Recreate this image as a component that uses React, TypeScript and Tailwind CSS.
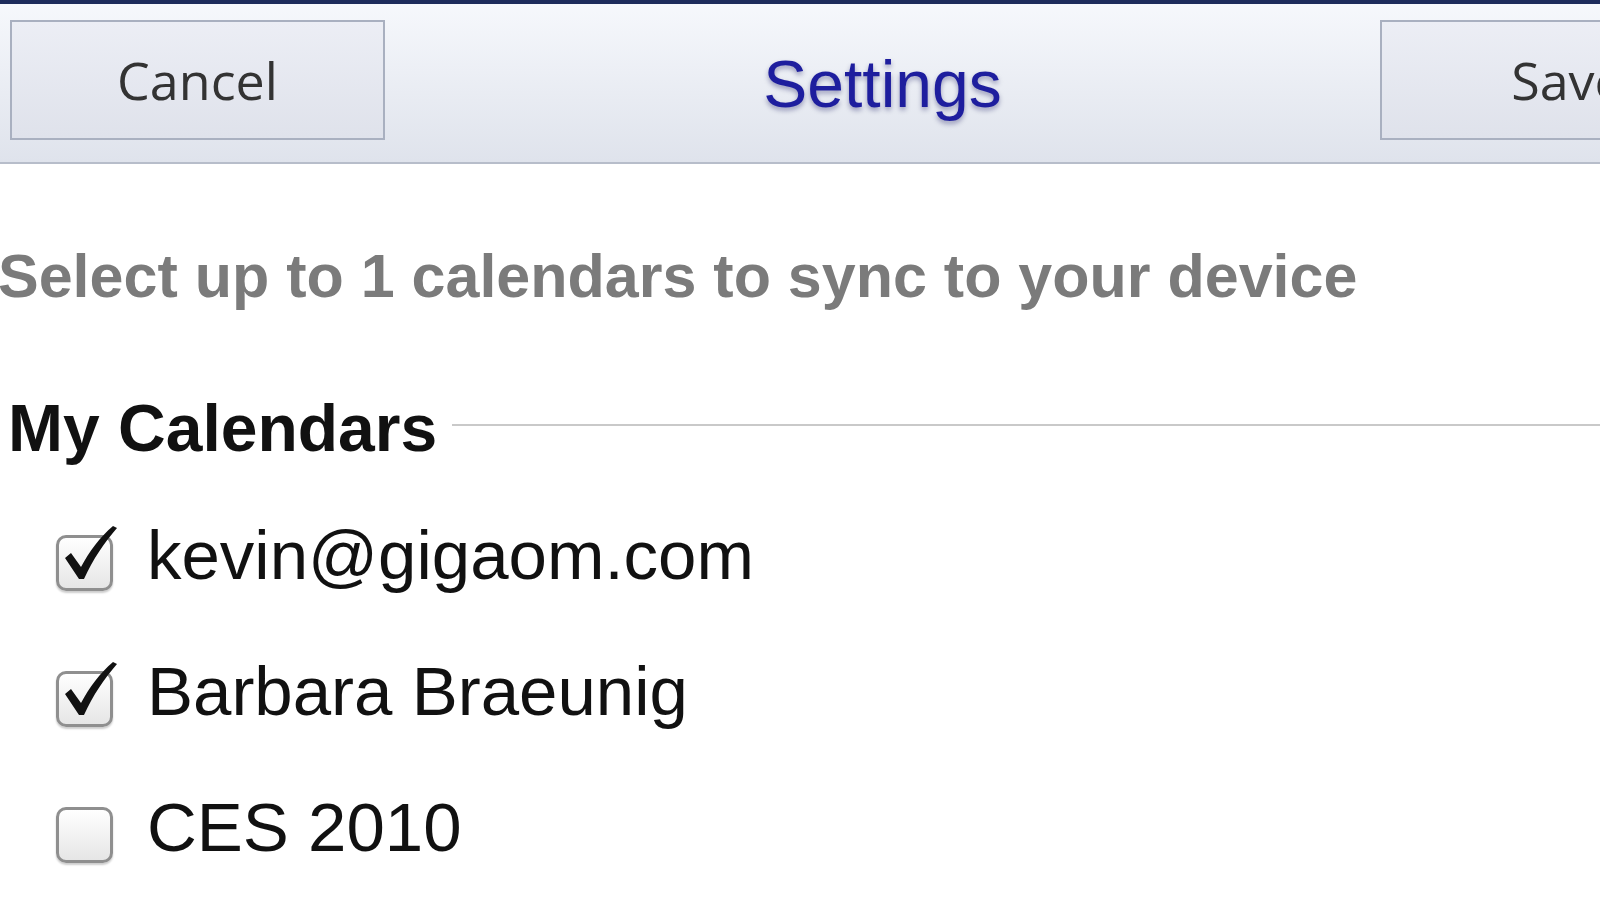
import React from "react";

function Check() {
  return (
    <svg
      className="absolute left-0 top-[-16px] pointer-events-none"
      width="70"
      height="72"
      viewBox="0 0 70 72"
    >
      <path
        d="M9 39 L15 34 L25 48 C33 33 44 18 57 7 L61 9 C48 24 37 40 28 60 L23 60 Z"
        fill="#111"
      />
    </svg>
  );
}

function Row({ label, checked }: { label: string; checked: boolean }) {
  return (
    <div className="flex items-start h-[68px]">
      <div className="relative mt-[14px] w-[57px] h-[56px] shrink-0">
        <div className="w-full h-full rounded-[10px] border-[3px] border-[#8f8f8f] bg-gradient-to-b from-[#ffffff] to-[#e6e6e6] shadow-[0_2px_2px_rgba(0,0,0,0.2)]" />
        {checked && <Check />}
      </div>
      <span className="ml-[34px] text-[69px] leading-none text-[#111] font-['Liberation_Sans',Arial,sans-serif]">
        {label}
      </span>
    </div>
  );
}

export default function App() {
  return (
    <div className="w-full h-[900px] overflow-hidden bg-white">
      <div className="w-[1765px]">
        <header className="h-[164px] border-t-4 border-[#1d2c5c] border-b-2 border-b-[#b7bdca] bg-gradient-to-b from-[#f6f8fc] to-[#dfe3ec] flex items-start justify-between px-[10px] pt-[16px]">
          <button className="w-[375px] h-[120px] border-2 border-[#a9b0c0] bg-gradient-to-b from-[#eceef5] to-[#dfe2eb] text-[52px] text-[#333] font-['Open_Sans',sans-serif] flex items-center justify-center">
            Cancel
          </button>
          <h1 className="self-center -mt-[14px] text-[66px] text-[#1e1e9e] font-['Liberation_Sans',Arial,sans-serif] [text-shadow:0_3px_5px_rgba(0,0,80,0.35)]">
            Settings
          </h1>
          <button className="w-[375px] h-[120px] border-2 border-[#a9b0c0] bg-gradient-to-b from-[#eceef5] to-[#dfe2eb] text-[52px] text-[#333] font-['Open_Sans',sans-serif] flex items-center justify-center">
            Save
          </button>
        </header>

        <p className="mt-[82px] -ml-[2px] text-[61px] leading-none font-bold text-[#7b7b7b] font-['Liberation_Sans',Arial,sans-serif]">
          Select up to 1 calendars to sync to your device
        </p>

        <div className="mt-[88px] flex items-center pl-[8px]">
          <h2 className="text-[66px] leading-none font-bold text-[#111] font-['Liberation_Sans',Arial,sans-serif]">
            My Calendars
          </h2>
          <div className="flex-1 ml-[15px] mb-[6px] h-[2px] bg-[#c9c9c9]" />
        </div>

        <div className="mt-[60px] pl-[56px] flex flex-col gap-[68px]">
          <Row label="kevin@gigaom.com" checked />
          <Row label="Barbara Braeunig" checked />
          <Row label="CES 2010" checked={false} />
        </div>
      </div>
    </div>
  );
}
